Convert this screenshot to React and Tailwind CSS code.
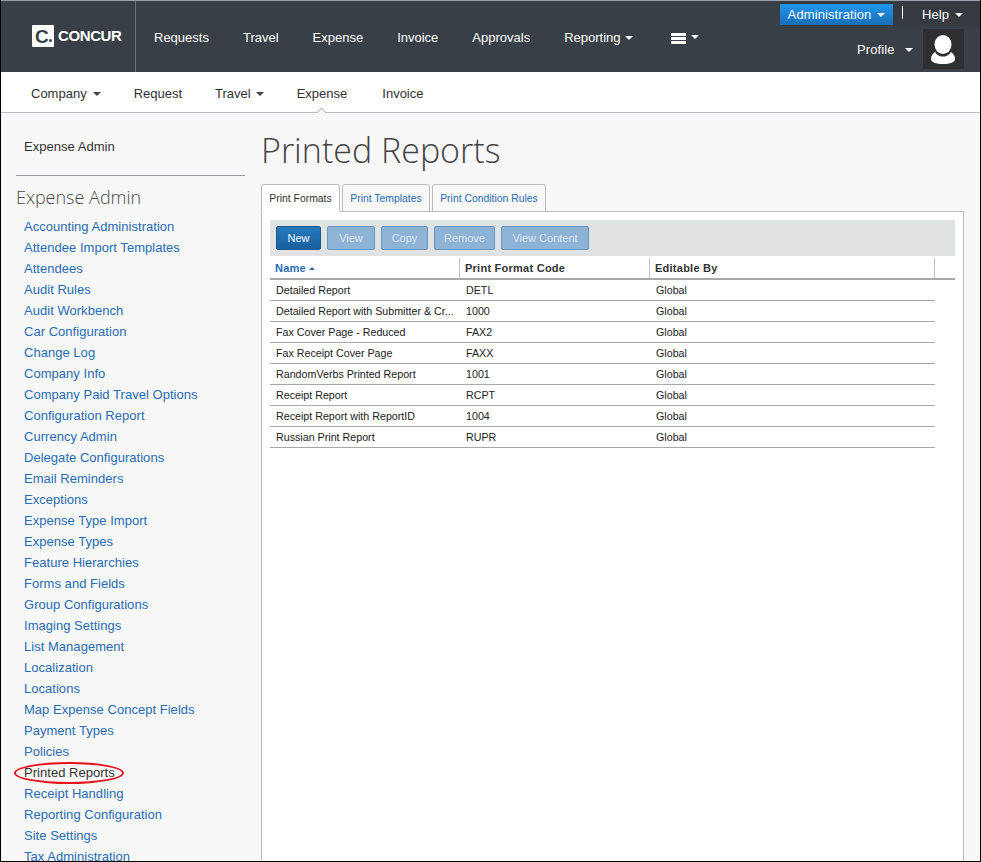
const topNav = ["Requests", "Travel", "Expense", "Invoice", "Approvals"];

const adminLinks = [
  "Accounting Administration", "Attendee Import Templates", "Attendees", "Audit Rules", "Audit Workbench",
  "Car Configuration", "Change Log", "Company Info", "Company Paid Travel Options", "Configuration Report",
  "Currency Admin", "Delegate Configurations", "Email Reminders", "Exceptions", "Expense Type Import",
  "Expense Types", "Feature Hierarchies", "Forms and Fields", "Group Configurations", "Imaging Settings",
  "List Management", "Localization", "Locations", "Map Expense Concept Fields", "Payment Types", "Policies",
  "Printed Reports", "Receipt Handling", "Reporting Configuration", "Site Settings", "Tax Administration",
];

const rows = [
  ["Detailed Report", "DETL"],
  ["Detailed Report with Submitter & Cr...", "1000"],
  ["Fax Cover Page - Reduced", "FAX2"],
  ["Fax Receipt Cover Page", "FAXX"],
  ["RandomVerbs Printed Report", "1001"],
  ["Receipt Report", "RCPT"],
  ["Receipt Report with ReportID", "1004"],
  ["Russian Print Report", "RUPR"],
];

function Caret({ className = "border-t-white" }) {
  return <span className={`inline-block w-0 h-0 border-x-[4px] border-x-transparent border-t-[4px] ${className}`} />;
}

function Header() {
  return (
    <div className="h-[72px] bg-[#393f47] flex text-white text-[13px] relative border-t border-[#9aa3ad]">
      <div className="w-[135px] h-[71px] border-r border-[#6b7077] flex items-center pl-[31px] pb-[1px]">
        <div className="w-[22px] h-[22px] bg-white rounded-[1px] flex items-center text-[#393f47] font-bold text-[19px] leading-none pl-[3px]">
          C<span className="w-[3px] h-[3px] bg-[#393f47] rounded-full mt-[8px]" />
        </div>
        <span className="ml-[4px] font-bold text-[15px] tracking-[-0.4px]">CONCUR</span>
      </div>
      <div className="flex items-center gap-[34px] pl-[18px] pt-[3px]">
        {topNav.map((t) => <span key={t}>{t}</span>)}
        <span className="flex items-center gap-[4px]">Reporting <Caret /></span>
        <span className="flex items-center gap-[5px] ml-[4px]">
          <span className="w-[15px] flex flex-col gap-[1px]">
            <span className="h-[3px] bg-white" />
            <span className="h-[3px] bg-white" />
            <span className="h-[3px] bg-white" />
          </span>
          <Caret className="border-t-white mb-[3px]" />
        </span>
      </div>
      <div className="ml-auto w-[200px] flex flex-col">
        <div className="flex h-[25px] bg-[#353a41]">
          <div className="mt-[3px] w-[113px] h-[21px] tracking-[0.1px] bg-gradient-to-b from-[#2196ee] to-[#1a6db5] flex items-center justify-center gap-[6px]">
            Administration <Caret />
          </div>
          <span className="ml-[9px] mt-[5px] h-[13px] w-px bg-white" />
          <span className="ml-[19px] flex items-center gap-[6px] pt-[2px] tracking-[0.1px]">Help <Caret /></span>
        </div>
        <div className="flex mt-[3px] pl-[77px]">
          <span className="flex items-center gap-[10px] h-[40px] pt-[2px] tracking-[0.1px]">Profile <Caret /></span>
          <div className="ml-[10px] w-[41px] h-[40px] bg-[#2f2f31] flex items-center justify-center">
            <svg width="24" height="29" viewBox="0 0 24 29">
              <path d="M0 24c0-5 4-7.500 8-8.500h8c4 1 8 3.500 8 8.500 0 3.500-5 5-12 5S0 27.500 0 24z" fill="#fff" />
              <ellipse cx="12" cy="10" rx="10" ry="11.500" fill="#2f2f31" />
              <ellipse cx="12" cy="9.500" rx="8.500" ry="9.500" fill="#fff" />
            </svg>
          </div>
        </div>
      </div>
    </div>
  );
}

function SubNav() {
  return (
    <div className="h-[41px] bg-white border-b border-[#b9bcc0] flex items-center pl-[30px] pt-[3px] text-[13px] text-[#333] gap-[33px] relative">
      <span className="flex items-center gap-[6px]">Company <Caret className="border-t-[#444]" /></span>
      <span>Request</span>
      <span className="flex items-center gap-[5px]">Travel <Caret className="border-t-[#444]" /></span>
      <span>Expense</span>
      <span className="ml-[2px]">Invoice</span>
      <span className="absolute left-[317px] bottom-[-4px] w-[7px] h-[7px] rotate-45 bg-[#f8f8f8] border-l border-t border-[#b9bcc0]" />
    </div>
  );
}

function Sidebar() {
  return (
    <div className="w-[260px] shrink-0 pl-[15px] text-[13px] tracking-[0.03px]">
      <div className="pl-[8px] pt-[24px] h-[63px] text-[#333] leading-[20px] w-[229px] border-b border-[#9c9ca3]">Expense Admin</div>
      <h2 className="mt-[9px] h-[28px] leading-[24px] text-[18px] tracking-normal text-[#4a4a4a] font-light font-['Open_Sans',sans-serif]">Expense Admin</h2>
      <ul className="pl-[8px] mt-[4px]">
        {adminLinks.map((l) => (
          <li key={l} className="h-[21px] leading-[20px] text-[#2a6cb3] relative whitespace-nowrap">
            {l === "Printed Reports" ? (
              <>
                <span className="text-[#333]">{l}</span>
                <span className="absolute left-[-10px] top-[-1px] w-[110px] h-[22px] rounded-[50%] border-2 border-[#e8121c]" />
              </>
            ) : l}
          </li>
        ))}
      </ul>
    </div>
  );
}

function Tab({ label, width, active }) {
  return (
    <div className={`${width} h-[28px] pt-[1px] border border-[#bcbcbc] rounded-t-[3px] flex items-center justify-center text-[10.4px] ${active ? "bg-white border-b-white text-[#333] relative z-10" : "bg-[#f8f8f8] text-[#2a6cb3] mb-[1px]"}`}>
      {label}
    </div>
  );
}

function ToolButton({ label, width, primary }) {
  return (
    <button
      className={`h-[24px] rounded-[2px] border text-[11px] ${primary ? "bg-gradient-to-b from-[#2479bb] to-[#19609f] border-[#19598f] text-white" : "bg-[#8fb3d6] border-[#6496c3] text-[#dbe6f0]"}`}
      style={{ width }}
    >
      {label}
    </button>
  );
}

function Main() {
  return (
    <div className="flex-1 min-w-0">
      <h1 className="mt-[13px] h-[58px] leading-[48px] text-[34px] text-[#444] font-light font-['Open_Sans',sans-serif]">Printed Reports</h1>
      <div className="flex gap-[2px] h-[28px] relative">
        <Tab label="Print Formats" width="w-[79px]" active />
        <Tab label="Print Templates" width="w-[88px]" />
        <Tab label="Print Condition Rules" width="w-[114px]" />
      </div>
      <div className="w-[703px] h-[700px] mt-[-1px] bg-white border border-[#bcbcbc] pt-[8px] pl-[8px]">
        <div className="w-[685px] h-[36px] bg-[#e1e2e2] flex items-center gap-[6px] pl-[6px]">
          <ToolButton label="New" width={45} primary />
          <ToolButton label="View" width={48} />
          <ToolButton label="Copy" width={47} />
          <ToolButton label="Remove" width={61} />
          <ToolButton label="View Content" width={88} />
        </div>
        <div className="w-[685px] h-[24px] border-b-2 border-[#a8a8a8] grid grid-cols-[190px_190px_285px_20px] text-[11px] font-bold tracking-[0.25px] text-[#333] pt-[2px]">
          <div className="pl-[5px] border-r border-[#c4c4c4] flex items-center gap-[3px] text-[#2a6cb3]">
            Name <span className="w-0 h-0 border-x-[3px] border-x-transparent border-b-[3px] border-b-[#2a6cb3]" />
          </div>
          <div className="pl-[5px] border-r border-[#c4c4c4] flex items-center">Print Format Code</div>
          <div className="pl-[5px] border-r border-[#c4c4c4] flex items-center">Editable By</div>
          <div />
        </div>
        {rows.map(([name, code]) => (
          <div key={code} className="w-[665px] h-[21px] border-b border-[#a8a8a8] grid grid-cols-[190px_190px_285px] items-center text-[10.7px] text-[#222]">
            <div className="pl-[6px] whitespace-nowrap">{name}</div>
            <div className="pl-[6px]">{code}</div>
            <div className="pl-[6px]">Global</div>
          </div>
        ))}
      </div>
    </div>
  );
}

export default function App() {
  return (
    <div className="w-[981px] h-[862px] overflow-hidden bg-[#f8f8f8] border-x border-b border-black font-['Liberation_Sans',Arial,sans-serif]">
      <Header />
      <SubNav />
      <div className="flex">
        <Sidebar />
        <Main />
      </div>
    </div>
  );
}
